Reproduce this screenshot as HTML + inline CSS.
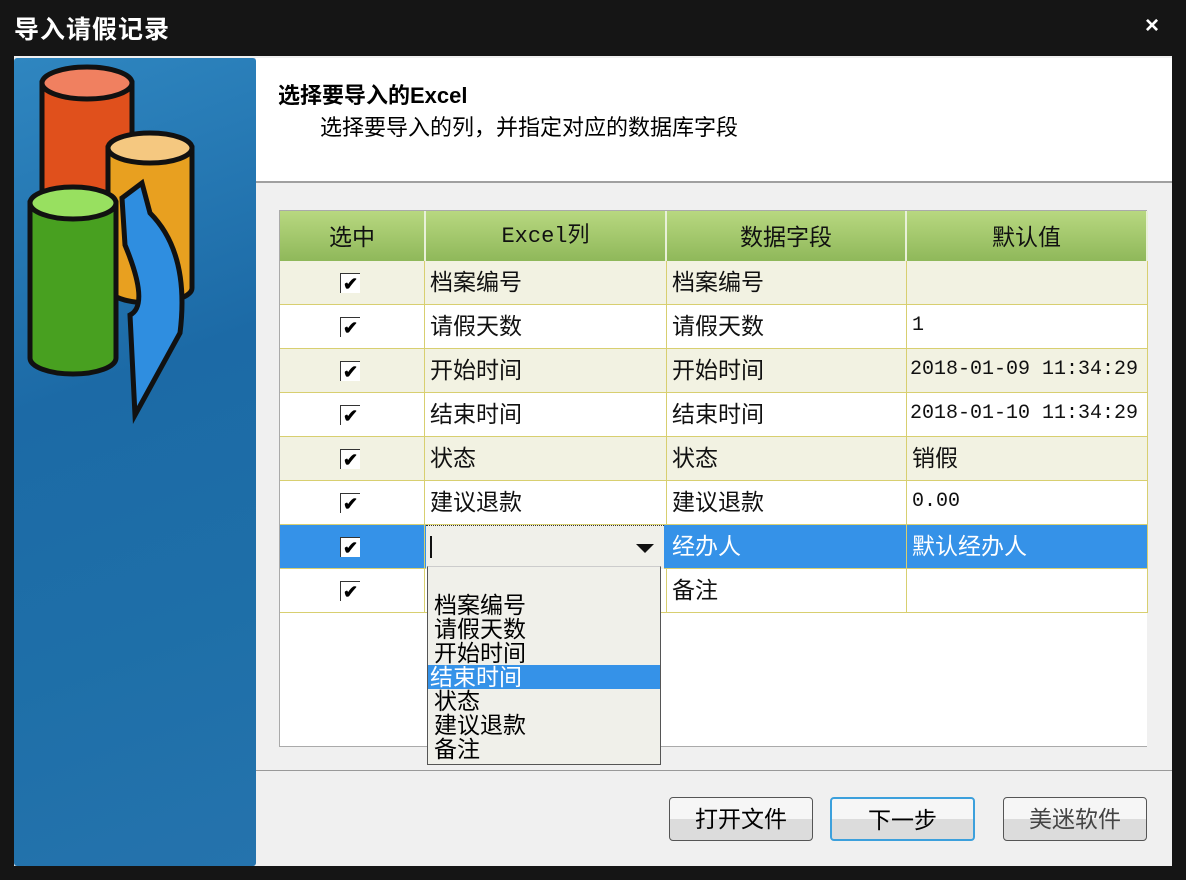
<!DOCTYPE html>
<html><head><meta charset="utf-8"><style>
*{margin:0;padding:0;box-sizing:border-box}
body{width:1186px;height:880px;background:#151515;position:relative;overflow:hidden;font-family:"Liberation Sans","Noto Sans CJK SC",sans-serif}
.abs{position:absolute}
.title{left:14px;top:10px;color:#fff;font-size:25px;font-weight:bold;letter-spacing:1px}
.close{left:1145px;top:12px;color:#fff;font-size:24px;font-weight:bold}
.win{left:14px;top:56px;width:1158px;height:810px;background:#f0f0f0}
.head{left:256px;top:58px;width:916px;height:125px;background:#fff;border-bottom:2px solid #a0a0a0}
.grid{left:279px;top:210px;width:868px;height:537px;background:#fff;border:1px solid #aaa;border-right:none}
.row{position:absolute;left:0;width:868px;height:44px;border-bottom:1px solid #d8cf70}
.cell{position:absolute;top:0;height:44px;border-right:1px solid #d8cf70;font-size:23px;color:#111;padding-left:5px;line-height:42px}
.hc{position:absolute;top:0;height:50px;background:linear-gradient(#b8d880,#8fb85a);border-right:2px solid #e8f0d8;text-align:center;font-size:23px;line-height:52px;color:#111}
.cb{position:absolute;left:60px;top:12px;width:20px;height:20px;border-left:1px solid #333;border-top:1px solid #333;background:#fff;font-size:18px;line-height:20px;text-align:center;font-weight:bold}
.mono{font-family:"Liberation Mono",monospace;font-size:20px}
.btn{position:absolute;top:797px;height:44px;border:1px solid #555;border-radius:4px;background:linear-gradient(#f6f6f6 50%,#dcdcdc 50%);font-size:23px;text-align:center;line-height:42px}
</style></head><body>
<div class="abs title">导入请假记录</div>
<div class="abs close">×</div>
<div class="abs win"></div>
<div class="abs" style="left:14px;top:58px;width:242px;height:808px;background:linear-gradient(160deg,#2f86c0,#1c6aa6 40%,#1e6fa8 70%,#2573ad);border-radius:3px"></div>
<svg class="abs" style="left:14px;top:58px" width="242" height="380">
<g stroke="#111" stroke-width="5">
<path d="M28 25 v150 a45 16 0 0 0 90 0 v-150 z" fill="#e0501c"/>
<ellipse cx="73" cy="25" rx="45" ry="16" fill="#f08060"/>
<path d="M94 90 v140 a42 15 0 0 0 84 0 v-140 z" fill="#e8a020"/>
<ellipse cx="136" cy="90" rx="42" ry="15" fill="#f5c880"/>
<path d="M16 145 v155 a43 16 0 0 0 86 0 v-155 z" fill="#48a020"/>
<ellipse cx="59" cy="145" rx="43" ry="16" fill="#98e060"/>
<path d="M108 140 l20 -15 l8 30 q40 40 30 120 l-45 82 l-5 -100 q20 -10 -5 -70 z" fill="#2f8ee0"/>
</g></svg>
<div class="abs head"></div>
<div class="abs" style="left:278px;top:78px;font-size:22px;font-weight:bold">选择要导入的Excel</div>
<div class="abs" style="left:320px;top:110px;font-size:22px">选择要导入的列，并指定对应的数据库字段</div>
<div class="abs grid">
<div class="hc" style="left:0;width:146px">选中</div>
<div class="hc mono" style="left:146px;width:241px;font-size:22px">Excel列</div>
<div class="hc" style="left:387px;width:240px">数据字段</div>
<div class="hc" style="left:627px;width:241px">默认值</div>

<div class="row" style="top:50px;background:#f2f2e2"><div class="cb">✔</div><div class="cell" style="left:0;width:145px"></div><div class="cell" style="left:145px;width:242px">档案编号</div><div class="cell" style="left:387px;width:240px">档案编号</div><div class="cell" style="left:627px;width:241px"></div></div>
<div class="row" style="top:94px;background:#fff"><div class="cb">✔</div><div class="cell" style="left:0;width:145px"></div><div class="cell" style="left:145px;width:242px">请假天数</div><div class="cell" style="left:387px;width:240px">请假天数</div><div class="cell mono" style="left:627px;width:241px">1</div></div>
<div class="row" style="top:138px;background:#f2f2e2"><div class="cb">✔</div><div class="cell" style="left:0;width:145px"></div><div class="cell" style="left:145px;width:242px">开始时间</div><div class="cell" style="left:387px;width:240px">开始时间</div><div class="cell mono" style="left:627px;width:241px;padding-left:3px">2018-01-09 11:34:29</div></div>
<div class="row" style="top:182px;background:#fff"><div class="cb">✔</div><div class="cell" style="left:0;width:145px"></div><div class="cell" style="left:145px;width:242px">结束时间</div><div class="cell" style="left:387px;width:240px">结束时间</div><div class="cell mono" style="left:627px;width:241px;padding-left:3px">2018-01-10 11:34:29</div></div>
<div class="row" style="top:226px;background:#f2f2e2"><div class="cb">✔</div><div class="cell" style="left:0;width:145px"></div><div class="cell" style="left:145px;width:242px">状态</div><div class="cell" style="left:387px;width:240px">状态</div><div class="cell" style="left:627px;width:241px">销假</div></div>
<div class="row" style="top:270px;background:#fff"><div class="cb">✔</div><div class="cell" style="left:0;width:145px"></div><div class="cell" style="left:145px;width:242px">建议退款</div><div class="cell" style="left:387px;width:240px">建议退款</div><div class="cell mono" style="left:627px;width:241px">0.00</div></div>
<div class="row" style="top:314px;background:#3592e8"><div class="cb" style="background:#fff">✔</div><div class="cell" style="left:0;width:145px"></div><div class="cell" style="left:387px;width:240px;color:#fff">经办人</div><div class="cell" style="left:627px;width:241px;color:#fff">默认经办人</div>
<div style="position:absolute;left:146px;top:0;width:238px;height:44px;background:#f0f0ea;border-top:1px dotted #333"><div style="position:absolute;left:4px;top:10px;width:2px;height:22px;background:#111"></div><div style="position:absolute;right:10px;top:18px;border:9px solid transparent;border-top:9px solid #111;border-bottom:none"></div></div></div>
<div class="row" style="top:358px;background:#fff"><div class="cb">✔</div><div class="cell" style="left:0;width:145px"></div><div class="cell" style="left:145px;width:242px"></div><div class="cell" style="left:387px;width:240px">备注</div><div class="cell" style="left:627px;width:241px"></div></div>
</div>
<div class="abs" style="left:427px;top:566px;width:234px;height:199px;background:#f0f0ea;border:1px solid #555;border-top:1px solid #ccc;font-size:23px;line-height:24px;padding-top:26px">
<div style="padding-left:6px">档案编号</div><div style="padding-left:6px">请假天数</div><div style="padding-left:6px">开始时间</div><div style="padding-left:2px;background:#3592e8;color:#fff">结束时间</div><div style="padding-left:6px">状态</div><div style="padding-left:6px">建议退款</div><div style="padding-left:6px">备注</div></div>
<div class="abs" style="left:256px;top:770px;width:916px;height:1px;background:#999"></div>
<div class="btn" style="left:669px;width:144px">打开文件</div>
<div class="btn" style="left:830px;width:145px;border:2px solid #3ca0dc">下一步</div>
<div class="btn" style="left:1003px;width:144px;color:#444">美迷软件</div>
<div class="abs" style="left:0;top:866px;width:1186px;height:14px;background:#151515"></div>
</body></html>
